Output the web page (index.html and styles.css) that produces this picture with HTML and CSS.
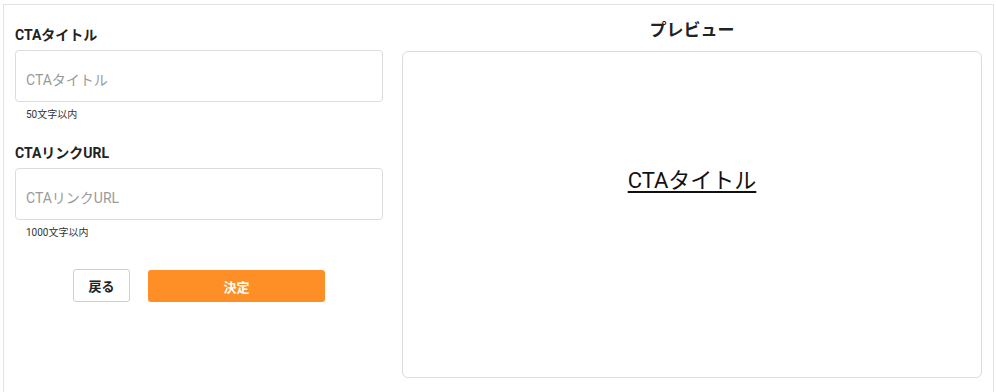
FILE: index.html
```html
<!DOCTYPE html>
<html lang="ja">
<head>
<meta charset="utf-8">
<link rel="stylesheet" href="styles.css">
</head>
<body>
<div class="panel">
  <div class="form">
    <div class="field">
      <label class="label">CTAタイトル</label>
      <div class="input"><span class="placeholder">CTAタイトル</span></div>
      <div class="help">50文字以内</div>
    </div>
    <div class="field field-2">
      <label class="label">CTAリンクURL</label>
      <div class="input"><span class="placeholder">CTAリンクURL</span></div>
      <div class="help">1000文字以内</div>
    </div>
    <div class="actions">
      <button class="btn btn-back">戻る</button>
      <button class="btn btn-ok">決定</button>
    </div>
  </div>
  <div class="preview">
    <div class="preview-title">プレビュー</div>
    <div class="preview-box">
      <a class="preview-link">CTAタイトル</a>
    </div>
  </div>
</div>
</body>
</html>
```

FILE: styles.css
```css
html, body {
  margin: 0;
  padding: 0;
  background: #fff;
}
body {
  padding: 4px 2px 0 3px;
  font-family: Roboto, "Noto Sans CJK JP", sans-serif;
  color: #222;
  overflow: hidden;
}
.panel {
  border: 1px solid #e3e3e3;
  border-bottom: none;
  height: 388px;
  box-sizing: border-box;
  padding: 14px 11px 0 11px;
  display: grid;
  grid-template-columns: 368px 1fr;
  column-gap: 19px;
  align-items: start;
}
.form {
  margin-top: 6px;
}
.field-2 {
  margin-top: 22px;
}
.label {
  display: block;
  font-size: 14px;
  font-weight: 700;
  line-height: 20px;
  color: #222;
}
.input {
  margin-top: 5px;
  height: 52px;
  box-sizing: border-box;
  border: 1px solid #dcdcdc;
  border-radius: 4px;
  display: flex;
  align-items: center;
  padding: 6px 0 0 10px;
}
.placeholder {
  font-size: 14px;
  color: #9a9a9a;
}
.help {
  margin-top: 7px;
  padding-left: 11px;
  font-size: 10px;
  line-height: 12px;
  color: #333;
}
.actions {
  margin-top: 30px;
  display: flex;
  justify-content: center;
  gap: 18px;
}
.btn {
  height: 33px;
  box-sizing: border-box;
  border-radius: 3px;
  font-family: Roboto, "Noto Sans CJK JP", sans-serif;
  font-size: 13px;
  font-weight: 700;
  padding: 0;
  cursor: pointer;
}
.btn-back {
  width: 57px;
  background: #fff;
  border: 1px solid #cfcfcf;
  color: #222;
}
.btn-ok {
  width: 177px;
  height: 32px;
  margin-top: 1px;
  background: #fd8f26;
  border: none;
  color: #fff;
}
.preview-title {
  text-align: center;
  font-size: 17px;
  font-weight: 700;
  line-height: 22px;
  color: #222;
}
.preview-box {
  margin-top: 10px;
  height: 327px;
  box-sizing: border-box;
  border: 1px solid #dcdcdc;
  border-radius: 6px;
  padding-top: 114px;
  text-align: center;
}
.preview-link {
  font-size: 22px;
  line-height: 30px;
  color: #111;
  text-decoration: underline;
  text-underline-offset: 3px;
}
```
